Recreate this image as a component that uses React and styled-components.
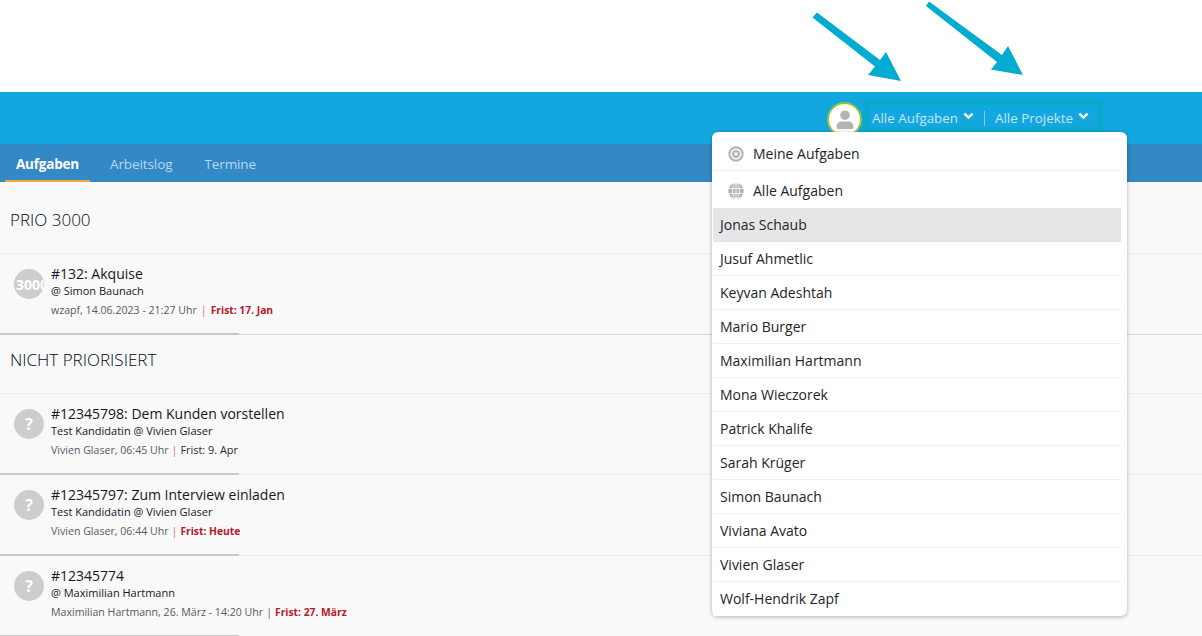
import React from "react";
import styled, { createGlobalStyle } from "styled-components";

const Global = createGlobalStyle`
  html, body { margin: 0; padding: 0; background: #fff; }
  body { font-family: "Open Sans", "Liberation Sans", sans-serif; }
  * { box-sizing: border-box; }
`;

const Page = styled.div`
  position: relative;
  width: 1202px;
  height: 636px;
  overflow: hidden;
  background: #f9f9f9;
`;
const TopSpace = styled.div`
  height: 92px;
  background: #fff;
`;
const ArrowLayer = styled.svg`
  position: absolute;
  left: 0;
  top: 0;
  pointer-events: none;
`;
const Header = styled.header`
  height: 52px;
  background: #14a7df;
  display: flex;
  align-items: flex-start;
  justify-content: flex-end;
  padding: 7px 99px 0 0;
`;
const Avatar = styled.div`
  width: 35px;
  height: 35px;
  margin: 3px 1px 0 0;
  border-radius: 50%;
  background: #fff;
  border: 2px solid #8cc63f;
  display: flex;
  align-items: center;
  justify-content: center;
`;
const Highlight = styled.div`
  width: 240px;
  height: 34px;
  border: 6px solid #08a9cd;
  display: flex;
  align-items: center;
  color: #c4e7f9;
  font-size: 13.4px;
`;
const Select = styled.div`
  display: flex;
  align-items: center;
  width: ${(p) => p.$w}px;
  padding-left: ${(p) => p.$pad}px;
  height: 15px;
  border-left: ${(p) => (p.$divider ? "1px solid #7fcdee" : "none")};
  white-space: nowrap;
  position: relative;
  top: 2px;
`;
const Caret = styled.svg`
  margin: -5px 0 0 5px;
  flex: none;
`;
const Tabs = styled.nav`
  height: 38px;
  background: #3388c6;
  display: flex;
  padding-left: 5px;
`;
const Tab = styled.div`
  height: 38px;
  padding: 10px 11px 0;
  margin-right: ${(p) => p.$mr}px;
  font-size: 13.5px;
  line-height: 20px;
  letter-spacing: ${(p) => (p.$active ? "-0.2px" : "-0.1px")};
  font-weight: ${(p) => (p.$active ? 700 : 400)};
  color: ${(p) => (p.$active ? "#fff" : "#bcd9ee")};
  border-bottom: ${(p) => (p.$active ? "2px solid #f5a33c" : "none")};
`;
const SectionTitle = styled.h2`
  margin: 0;
  height: ${(p) => p.$h}px;
  padding: ${(p) => p.$top}px 0 0 10px;
  font-size: 17px;
  line-height: 22px;
  font-weight: 300;
  color: #000a20;
  border-bottom: 1px solid #ececec;
`;
const Row = styled.article`
  position: relative;
  height: ${(p) => p.$h}px;
  padding: 11px 0 0 14px;
  display: flex;
  gap: 7px;
  border-bottom: 1px solid ${(p) => (p.$strong ? "#d2d2d2" : "#ececec")};
  &::after {
    content: "";
    position: absolute;
    left: 0;
    bottom: -1px;
    width: 239px;
    height: 2px;
    background: #c8c8c8;
  }
`;
const Badge = styled.div`
  flex: none;
  width: 30px;
  height: 30px;
  margin-top: 4px;
  padding-left: ${(p) => (p.$small ? 0 : 2)}px;
  border-radius: 50%;
  background: #cdcdcd;
  color: #fff;
  font-weight: 700;
  font-size: ${(p) => (p.$small ? 16 : 14)}px;
  overflow: hidden;
  display: flex;
  align-items: center;
  justify-content: ${(p) => (p.$small ? "center" : "flex-start")};
  white-space: nowrap;
`;
const RowBody = styled.div`
  display: flex;
  flex-direction: column;
`;
const RowTitle = styled.div`
  font-size: 14px;
  line-height: 18px;
  color: #14171f;
`;
const RowSub = styled.div`
  font-size: 11px;
  line-height: 15px;
  color: #14171f;
`;
const RowMeta = styled.div`
  font-size: 10.6px;
  line-height: 15px;
  margin-top: 5px;
  color: #555a64;
  white-space: nowrap;
`;
const Sep = styled.span`
  color: ${(p) => (p.$red ? "#d06a6a" : "#5a5f68")};
  margin: 0 ${(p) => p.$gap}px;
`;
const Due = styled.span`
  color: ${(p) => (p.$late ? "#b5182c" : "#2a2d34")};
  font-weight: ${(p) => (p.$late ? 700 : 400)};
  font-size: ${(p) => (p.$late ? 10.3 : 10.9)}px;
  line-height: 1;
`;
const Menu = styled.div`
  position: absolute;
  left: 712px;
  top: 132px;
  width: 415px;
  height: 484px;
  padding: 3px 6px 0 1px;
  background: #fff;
  border-radius: 6px;
  box-shadow: 0 1px 4px rgba(0, 0, 0, 0.3);
`;
const MenuHead = styled.div`
  display: flex;
  align-items: center;
  gap: 9px;
  height: ${(p) => p.$h}px;
  padding: 2px 0 0 15px;
  font-size: 14px;
  color: #22252b;
  border-bottom: ${(p) => (p.$line ? "1px solid #eee" : "none")};
`;
const MenuItem = styled.div`
  height: 34px;
  padding-left: 7px;
  display: flex;
  align-items: center;
  font-size: 14px;
  color: #22252b;
  background: ${(p) => (p.$selected ? "#e6e6e6" : "#fff")};
  border-bottom: 1px solid ${(p) => (p.$last ? "#fff" : p.$selected ? "#e6e6e6" : "#eee")};
`;

const User = () => (
  <svg width="18" height="20" viewBox="0 0 18 20" fill="#b4b4b4">
    <circle cx="9" cy="5.2" r="4.8" />
    <path d="M.6 16.500C.6 13 3 11.500 5.500 11.500h7c2.500 0 4.900 1.500 4.900 5v1c0 .9-.6 1.500-1.500 1.500H2.100C1.200 19 .6 18.400.6 17.500z" />
  </svg>
);
const Chevron = () => (
  <Caret width="11" height="8" viewBox="0 0 11 8">
    <path d="M1.400 1.600 5.500 5.600 9.600 1.600" fill="none" stroke="#fff" strokeWidth="2.500" />
  </Caret>
);
const Target = () => (
  <svg width="16" height="16" viewBox="0 0 16 16">
    <circle cx="8" cy="8" r="6.600" fill="none" stroke="#b4b4b4" strokeWidth="2.200" />
    <circle cx="8" cy="8" r="2.900" fill="none" stroke="#b4b4b4" strokeWidth="2.400" />
  </svg>
);
const Globe = () => (
  <svg width="16" height="16" viewBox="0 0 16 16">
    <circle cx="8" cy="8" r="7.800" fill="#b4b4b4" />
    <g fill="none" stroke="#fff" strokeWidth="0.800">
      <ellipse cx="8" cy="8" rx="3.400" ry="7.800" />
      <path d="M.5 5.500h15M.5 10.500h15M8 .2v15.600" />
    </g>
  </svg>
);

const people = [
  "Jonas Schaub", "Jusuf Ahmetlic", "Keyvan Adeshtah", "Mario Burger",
  "Maximilian Hartmann", "Mona Wieczorek", "Patrick Khalife", "Sarah Krüger",
  "Simon Baunach", "Viviana Avato", "Vivien Glaser", "Wolf-Hendrik Zapf",
];

const TaskRow = ({ h, badge, small, title, sub, meta, due, late, red, strong, gap = 3 }) => (
  <Row $h={h} $strong={strong}>
    <Badge $small={small}>{badge}</Badge>
    <RowBody>
      <RowTitle>{title}</RowTitle>
      <RowSub>{sub}</RowSub>
      <RowMeta>
        {meta}
        <Sep $red={red} $gap={gap}>|</Sep>
        <Due $late={late}>{due}</Due>
      </RowMeta>
    </RowBody>
  </Row>
);

export default function App() {
  return (
    <Page>
      <Global />
      <TopSpace />
      <Header>
        <Avatar><User /></Avatar>
        <Highlight>
          <Select $w={115} $pad={3}>Alle Aufgaben<Chevron /></Select>
          <Select $w={112} $pad={10} $divider>Alle Projekte<Chevron /></Select>
        </Highlight>
      </Header>
      <Tabs>
        <Tab $active $mr={9}>Aufgaben</Tab>
        <Tab $mr={10}>Arbeitslog</Tab>
        <Tab>Termine</Tab>
      </Tabs>
      <SectionTitle $h={72} $top={27}>PRIO 3000</SectionTitle>
      <TaskRow strong h={81} gap={4} badge="3000" title="#132: Akquise" sub="@ Simon Baunach"
        meta="wzapf, 14.06.2023 - 21:27 Uhr" due="Frist: 17. Jan" late red />
      <SectionTitle $h={59} $top={14}>NICHT PRIORISIERT</SectionTitle>
      <TaskRow h={81} small badge="?" title="#12345798: Dem Kunden vorstellen" sub="Test Kandidatin @ Vivien Glaser"
        meta="Vivien Glaser, 06:45 Uhr" due="Frist: 9. Apr" red />
      <TaskRow h={81} small badge="?" title="#12345797: Zum Interview einladen" sub="Test Kandidatin @ Vivien Glaser"
        meta="Vivien Glaser, 06:44 Uhr" due="Frist: Heute" late red />
      <TaskRow h={81} small badge="?" title="#12345774" sub="@ Maximilian Hartmann"
        meta="Maximilian Hartmann, 26. März - 14:20 Uhr" due="Frist: 27. März" late />
      <ArrowLayer width="1202" height="92" viewBox="0 0 1202 92">
        <g fill="#00acd0">
          <path d="M817 12.500 880 60 886 52 901 81 868 75 875 66.500 812.500 17.500z" />
          <path d="M929 1.500 1002 55 1008 46 1023 75 991 69.500 997 62 926 6z" />
        </g>
      </ArrowLayer>
      <Menu>
        <MenuHead $h={36} $line><Target />Meine Aufgaben</MenuHead>
        <MenuHead $h={37}><Globe />Alle Aufgaben</MenuHead>
        {people.map((name, i) => (
          <MenuItem key={name} $selected={i === 0} $last={i === people.length - 1}>{name}</MenuItem>
        ))}
      </Menu>
    </Page>
  );
}
